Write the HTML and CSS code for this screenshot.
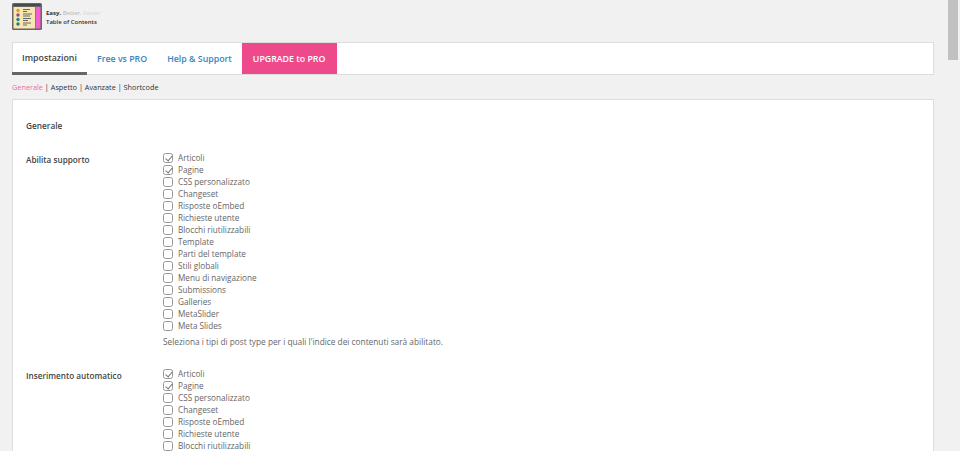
FILE: index.html
```html
<!DOCTYPE html>
<html lang="it">
<head>
<meta charset="utf-8">
<title>Easy Table of Contents</title>
<link rel="stylesheet" href="styles.css">
</head>
<body>
<div class="scrollbar"></div>
<main class="wrap">
  <header class="brand">
    <svg class="logo" width="30" height="27" viewBox="0 0 30 27">
      <rect width="30" height="27" rx="1.5" fill="#666"/>
      <rect x="1.500" y="4" width="21.500" height="21.500" fill="#f6e8b0"/>
      <rect x="23.500" y="4" width="5" height="21.500" fill="#f45fd0"/>
      <rect x="1.500" y="1.200" width="27" height="1.600" fill="#444"/>
      <circle cx="6" cy="7.500" r="1.700" fill="#d9a02e"/>
      <circle cx="6" cy="12" r="1.700" fill="#96488f"/>
      <circle cx="6" cy="16.500" r="1.700" fill="#1b858e"/>
      <circle cx="6" cy="21" r="1.700" fill="#2b7488"/>
      <path d="M11 6.500h7M11 8.500h4M11 11h9M11 13h7M11 15.500h8M11 17.500h5M11 20h8M11 22h4" stroke="#666" stroke-width="1"/>
    </svg>
    <div class="tagline">
      <div class="tag-top"><b>Easy.</b> <span class="faint">Better.</span> <span class="fainter">Faster</span></div>
      <div class="tag-bottom">Table of Contents</div>
    </div>
  </header>

  <nav class="tabs">
    <a class="tab tab-active">Impostazioni</a>
    <a class="tab">Free vs PRO</a>
    <a class="tab">Help &amp; Support</a>
    <a class="tab tab-upgrade">UPGRADE to PRO</a>
  </nav>

  <div class="subnav"><a class="current">Generale</a> | <a>Aspetto</a> | <a>Avanzate</a> | <a>Shortcode</a></div>

  <section class="card">
    <h2 class="section-title">Generale</h2>

    <div class="row">
      <div class="row-label">Abilita supporto</div>
      <div class="row-field">
        <label class="check"><input type="checkbox" checked>Articoli</label>
        <label class="check"><input type="checkbox" checked>Pagine</label>
        <label class="check"><input type="checkbox">CSS personalizzato</label>
        <label class="check"><input type="checkbox">Changeset</label>
        <label class="check"><input type="checkbox">Risposte oEmbed</label>
        <label class="check"><input type="checkbox">Richieste utente</label>
        <label class="check"><input type="checkbox">Blocchi riutilizzabili</label>
        <label class="check"><input type="checkbox">Template</label>
        <label class="check"><input type="checkbox">Parti del template</label>
        <label class="check"><input type="checkbox">Stili globali</label>
        <label class="check"><input type="checkbox">Menu di navigazione</label>
        <label class="check"><input type="checkbox">Submissions</label>
        <label class="check"><input type="checkbox">Galleries</label>
        <label class="check"><input type="checkbox">MetaSlider</label>
        <label class="check"><input type="checkbox">Meta Slides</label>
        <p class="hint">Seleziona i tipi di post type per i quali l'indice dei contenuti sarà abilitato.</p>
      </div>
    </div>

    <div class="row">
      <div class="row-label">Inserimento automatico</div>
      <div class="row-field">
        <label class="check"><input type="checkbox" checked>Articoli</label>
        <label class="check"><input type="checkbox" checked>Pagine</label>
        <label class="check"><input type="checkbox">CSS personalizzato</label>
        <label class="check"><input type="checkbox">Changeset</label>
        <label class="check"><input type="checkbox">Risposte oEmbed</label>
        <label class="check"><input type="checkbox">Richieste utente</label>
        <label class="check"><input type="checkbox">Blocchi riutilizzabili</label>
      </div>
    </div>
  </section>
</main>
</body>
</html>
```

FILE: styles.css
```css
* { box-sizing: border-box; }

html, body {
  height: 451px;
  overflow: hidden;
}

body {
  margin: 0;
  background: #f1f1f1;
  color: #444;
  font-family: "Open Sans", "Liberation Sans", sans-serif;
  font-size: 8.300px;
}

.scrollbar {
  position: fixed;
  top: 0;
  right: 2px;
  width: 10px;
  height: 60px;
  background: #c1c1c1;
}

.wrap {
  width: 922px;
  margin-left: 12px;
}

.brand {
  display: flex;
  align-items: flex-start;
  gap: 4px;
  height: 42px;
  padding-top: 3px;
}

.logo { flex: none; }

.tagline {
  margin-top: 6px;
  font-size: 6px;
  line-height: 8.500px;
  color: #333;
  font-weight: 600;
}

.tag-top b { font-weight: 700; }
.faint { color: #b5b5b5; font-weight: 400; }
.fainter { color: #d5d5d5; font-weight: 400; }

.tabs {
  display: flex;
  height: 33px;
  background: #fff;
  border: 1px solid #ddd;
}

.tab {
  display: flex;
  flex: none;
  align-items: center;
  padding: 0 10px;
  height: 31px;
  font-size: 8.800px;
  font-weight: 600;
  color: #3b84c0;
  white-space: nowrap;
}

.tab-active {
  color: #444;
  width: 75px;
  margin-left: -1px;
  margin-bottom: -1px;
  height: 32px;
  border-bottom: 3px solid #666;
}

.tab-upgrade {
  background: #ee4a8b;
  color: #fff;
  width: 95px;
  padding: 0 11px;
}

.subnav {
  margin-top: 6px;
  height: 18px;
  line-height: 12px;
  color: #333;
  font-size: 7.300px;
}

.current { color: #ee6a9f; }

.card {
  height: 400px;
  background: #fff;
  border: 1px solid #ddd;
  padding: 0 13px;
}

.section-title {
  margin: 0;
  padding-top: 19px;
  height: 52px;
  line-height: 13px;
  font-size: 8.300px;
  font-weight: 600;
  color: #444;
}

.row {
  display: flex;
  margin-bottom: 19px;
}

.row-label {
  width: 137px;
  flex: none;
  padding-top: 2px;
  line-height: 12px;
  font-size: 8.200px;
  font-weight: 600;
  color: #444;
}

.check {
  display: flex;
  align-items: center;
  gap: 5px;
  height: 12px;
  line-height: 12px;
  color: #666;
  font-size: 8.200px;
}

.check input {
  appearance: none;
  position: relative;
  flex: none;
  width: 10px;
  height: 10px;
  margin: 0;
  background: #fff;
  border: 1px solid #999;
  border-radius: 2.500px;
}

.check input:checked::after {
  content: "";
  position: absolute;
  left: 2.500px;
  top: 0;
  width: 3px;
  height: 6px;
  border: solid #777;
  border-width: 0 1px 1px 0;
  transform: rotate(40deg);
}

.hint {
  margin: 3px 0 0;
  line-height: 14px;
  font-size: 8.300px;
  color: #666;
}
```
